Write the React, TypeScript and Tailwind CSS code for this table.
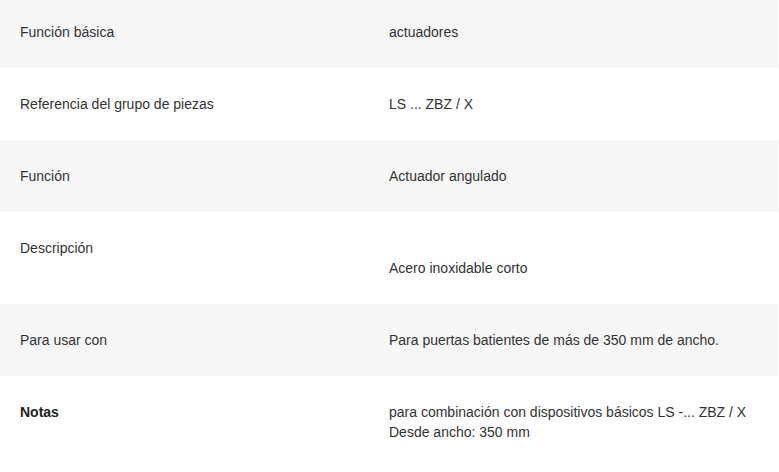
const ROWS: { label: string; value: React.ReactNode; bold?: boolean }[] = [
  { label: "Función básica", value: "actuadores" },
  { label: "Referencia del grupo de piezas", value: "LS ... ZBZ / X" },
  { label: "Función", value: "Actuador angulado" },
  {
    label: "Descripción",
    value: (
      <>
        <br />
        Acero inoxidable corto
      </>
    ),
  },
  { label: "Para usar con", value: "Para puertas batientes de más de 350 mm de ancho." },
  {
    label: "Notas",
    bold: true,
    value: (
      <>
        para combinación con dispositivos básicos LS -... ZBZ / X
        <br />
        Desde ancho: 350 mm
      </>
    ),
  },
];

export default function App() {
  return (
    <div
      className="w-[779px] h-[472px] overflow-hidden bg-white text-[14px] leading-[20px] text-[#333]"
      style={{ fontFamily: '"Liberation Sans", Arial, sans-serif' }}
    >
      <div className="w-[778px]">
        {ROWS.map((row, i) => (
          <div
            key={row.label}
            className={`grid grid-cols-[369px_1fr] ${i % 2 === 0 ? "bg-[#f7f7f7]" : "bg-white"} ${
              i === 0 ? "pt-[22px] pb-[26px]" : "py-[26px]"
            }`}
          >
            <div className={`pl-5 pr-5 ${row.bold ? "font-bold text-[#222]" : ""}`}>{row.label}</div>
            <div className="pl-5 pr-5">{row.value}</div>
          </div>
        ))}
      </div>
    </div>
  );
}
